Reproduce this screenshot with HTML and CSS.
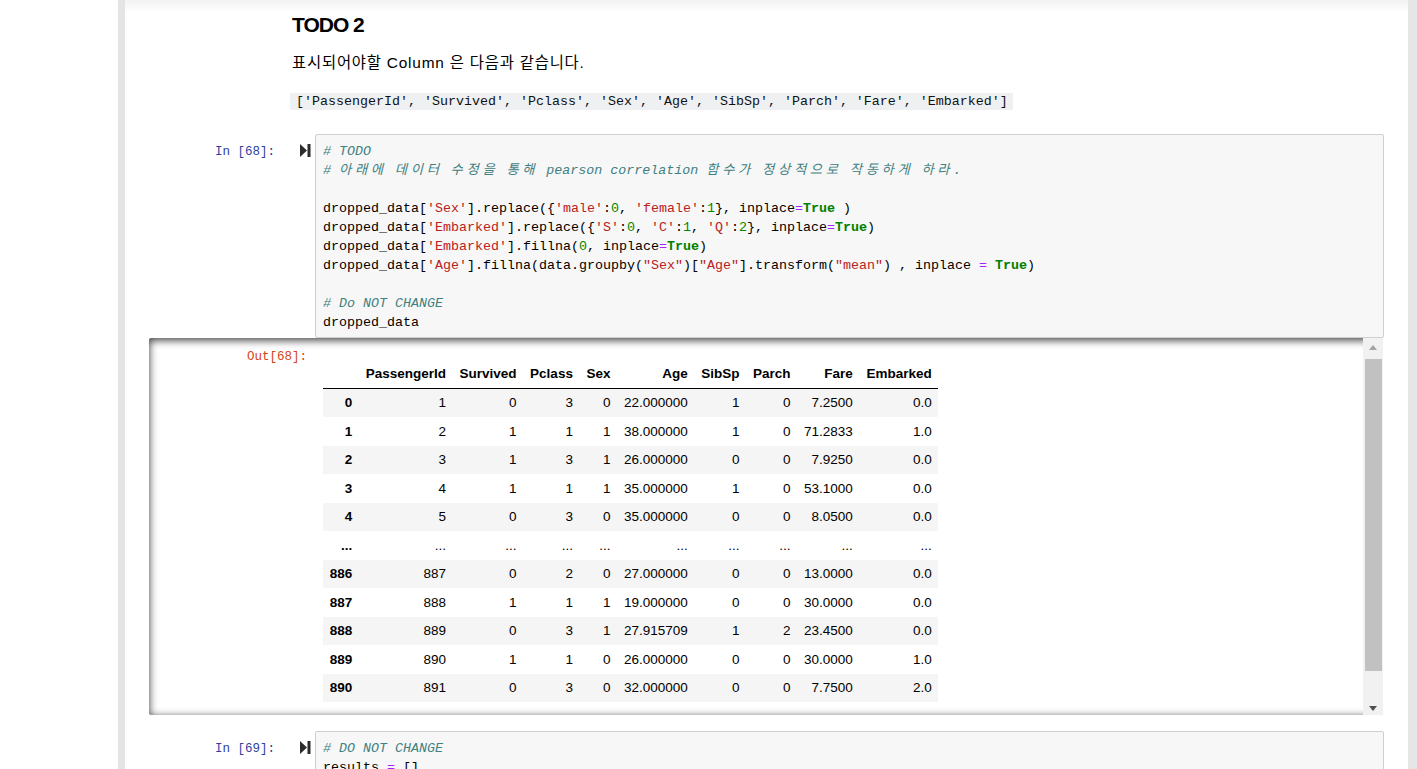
FILE: index.html
```html
<!DOCTYPE html>
<html lang="ko">
<head>
<meta charset="utf-8">
<title>Notebook</title>
<link rel="stylesheet" href="styles.css">
</head>
<body>
<div class="page">
  <div class="gutter"></div>
  <div class="notebook">
    <div class="cells">
      <div class="md">
        <h3 class="md-h">TODO 2</h3>
        <p class="md-p">표시되어야할 Column 은 다음과 같습니다.</p>
        <code class="md-code">['PassengerId', 'Survived', 'Pclass', 'Sex', 'Age', 'SibSp', 'Parch', 'Fare', 'Embarked']</code>
      </div>

      <div class="cell">
        <div class="in-row">
          <div class="prompt in-prompt">In&nbsp;[68]:</div>
          <div class="run"><svg width="11" height="13" viewBox="0 0 11 13"><polygon points="0,0 7,6.5 0,13" fill="#2b2b2b"/><rect x="7.5" y="0" width="3" height="13" fill="#2b2b2b"/></svg></div>
          <pre class="input"><span class="c"># TODO</span>
<span class="c"># <span class="ko">아래에</span> <span class="ko">데이터</span> <span class="ko">수정을</span> <span class="ko">통해</span> pearson correlation <span class="ko">함수가</span> <span class="ko">정상적으로</span> <span class="ko">작동하게</span> <span class="ko">하라</span>.</span>

dropped_data[<span class="s">'Sex'</span>].replace({<span class="s">'male'</span>:<span class="n">0</span>, <span class="s">'female'</span>:<span class="n">1</span>}, inplace<span class="o">=</span><span class="k">True</span> )
dropped_data[<span class="s">'Embarked'</span>].replace({<span class="s">'S'</span>:<span class="n">0</span>, <span class="s">'C'</span>:<span class="n">1</span>, <span class="s">'Q'</span>:<span class="n">2</span>}, inplace<span class="o">=</span><span class="k">True</span>)
dropped_data[<span class="s">'Embarked'</span>].fillna(<span class="n">0</span>, inplace<span class="o">=</span><span class="k">True</span>)
dropped_data[<span class="s">'Age'</span>].fillna(data.groupby(<span class="s">"Sex"</span>)[<span class="s">"Age"</span>].transform(<span class="s">"mean"</span>) , inplace <span class="o">=</span> <span class="k">True</span>)

<span class="c"># Do NOT CHANGE</span>
dropped_data</pre>
        </div>
        <div class="out-box">
          <div class="prompt out-prompt">Out[68]:</div>
          <div class="out-content">
            <table class="df">
              <thead>
                <tr><th></th><th>PassengerId</th><th>Survived</th><th>Pclass</th><th>Sex</th><th>Age</th><th>SibSp</th><th>Parch</th><th>Fare</th><th>Embarked</th></tr>
              </thead>
              <tbody>
                <tr><th>0</th><td>1</td><td>0</td><td>3</td><td>0</td><td>22.000000</td><td>1</td><td>0</td><td>7.2500</td><td>0.0</td></tr>
                <tr><th>1</th><td>2</td><td>1</td><td>1</td><td>1</td><td>38.000000</td><td>1</td><td>0</td><td>71.2833</td><td>1.0</td></tr>
                <tr><th>2</th><td>3</td><td>1</td><td>3</td><td>1</td><td>26.000000</td><td>0</td><td>0</td><td>7.9250</td><td>0.0</td></tr>
                <tr><th>3</th><td>4</td><td>1</td><td>1</td><td>1</td><td>35.000000</td><td>1</td><td>0</td><td>53.1000</td><td>0.0</td></tr>
                <tr><th>4</th><td>5</td><td>0</td><td>3</td><td>0</td><td>35.000000</td><td>0</td><td>0</td><td>8.0500</td><td>0.0</td></tr>
                <tr><th>...</th><td>...</td><td>...</td><td>...</td><td>...</td><td>...</td><td>...</td><td>...</td><td>...</td><td>...</td></tr>
                <tr><th>886</th><td>887</td><td>0</td><td>2</td><td>0</td><td>27.000000</td><td>0</td><td>0</td><td>13.0000</td><td>0.0</td></tr>
                <tr><th>887</th><td>888</td><td>1</td><td>1</td><td>1</td><td>19.000000</td><td>0</td><td>0</td><td>30.0000</td><td>0.0</td></tr>
                <tr><th>888</th><td>889</td><td>0</td><td>3</td><td>1</td><td>27.915709</td><td>1</td><td>2</td><td>23.4500</td><td>0.0</td></tr>
                <tr><th>889</th><td>890</td><td>1</td><td>1</td><td>0</td><td>26.000000</td><td>0</td><td>0</td><td>30.0000</td><td>1.0</td></tr>
                <tr><th>890</th><td>891</td><td>0</td><td>3</td><td>0</td><td>32.000000</td><td>0</td><td>0</td><td>7.7500</td><td>2.0</td></tr>
              </tbody>
            </table>
          </div>
          <div class="sbar">
            <div class="sb-btn"><span class="arr-up"></span></div>
            <div class="sb-thumb"></div>
            <div class="sb-track"></div>
            <div class="sb-btn"><span class="arr-down"></span></div>
          </div>
        </div>
      </div>

      <div class="cell cell2">
        <div class="in-row">
          <div class="prompt in-prompt">In&nbsp;[69]:</div>
          <div class="run"><svg width="11" height="13" viewBox="0 0 11 13"><polygon points="0,0 7,6.5 0,13" fill="#2b2b2b"/><rect x="7.5" y="0" width="3" height="13" fill="#2b2b2b"/></svg></div>
          <pre class="input"><span class="c"># DO NOT CHANGE</span>
results <span class="o">=</span> []
</pre>
        </div>
      </div>
    </div>
  </div>
</div>
</body>
</html>
```

FILE: styles.css
```css
html, body {
  margin: 0;
  padding: 0;
  background: #fff;
  overflow: hidden;
  height: 769px;
}

.page {
  display: flex;
  height: 769px;
}

.gutter {
  width: 118px;
  flex: none;
}

.notebook {
  flex: 1;
  border-left: 7px solid #e4e4e4;
  border-right: 9px solid #e6e6e6;
  background: linear-gradient(to bottom, #f2f2f2 0px, #fff 12px);
}

.cells {
  padding: 0 24px 0 24px;
}

/* Markdown cell */
.md {
  padding: 12px 0 0 143px;
  font-family: "Liberation Sans", "Noto Sans CJK KR", sans-serif;
  color: #000;
}

.md-h {
  margin: 0;
  font-size: 21px;
  line-height: 25px;
  font-weight: bold;
  letter-spacing: -1px;
}

.md-p {
  margin: 15px 0 0 0;
  font-size: 15.4px;
  line-height: 21px;
  letter-spacing: 0.8px;
}

.md-code {
  display: inline-block;
  margin: 20px 0 0 -2px;
  padding: 0 5px 0 6px;
  background: #eff0f1;
  font-family: "Liberation Mono", monospace;
  font-size: 13.33px;
  line-height: 17px;
  color: #111;
}

/* Code cells */
.cell {
  margin-top: 24px;
}

.cell2 {
  margin-top: 16px;
}

.in-row {
  display: flex;
  align-items: flex-start;
}

.prompt {
  font-family: "Liberation Mono", monospace;
  font-size: 12.5px;
  line-height: 19px;
  text-align: right;
  flex: none;
}

.in-prompt {
  width: 126px;
  padding: 9px 9px 0 0;
  color: #303f9f;
}

.run {
  width: 31px;
  flex: none;
  padding: 10px 0 0 16px;
  box-sizing: border-box;
}

.run svg {
  display: block;
}

.input {
  flex: 1;
  margin: 0;
  padding: 7px 7px 5px 7px;
  background: #f7f7f7;
  border: 1px solid #cfcfcf;
  border-radius: 2px;
  font-family: "Liberation Mono", "Noto Sans CJK KR", monospace;
  font-size: 13.33px;
  line-height: 19px;
  color: #000;
  white-space: pre;
}

.cell2 .input {
  height: 60px;
}

.c { color: #408080; font-style: italic; }
.s { color: #ba2121; }
.n { color: #008800; }
.k { color: #008000; font-weight: bold; }
.o { color: #aa22ff; }
.ko {
  letter-spacing: 3.67px;
  font-family: "Noto Sans CJK KR", sans-serif;
  line-height: 10px;
}

/* Output */
.out-box {
  display: flex;
  height: 377px;
  margin-right: 1px;
  box-shadow: inset 0 2px 8px rgba(0, 0, 0, 0.8);
  border-radius: 2px;
}

.out-prompt {
  width: 158px;
  padding: 10px 8px 0 0;
  color: #d84315;
}

.out-content {
  flex: 1;
  padding: 21px 0 0 8px;
}

.df {
  border-collapse: collapse;
  border-spacing: 0;
  font-family: "Liberation Sans", sans-serif;
  font-size: 13.5px;
  color: #000;
}

.df th, .df td {
  padding: 6.75px 6.75px;
  line-height: 15px;
  text-align: right;
  vertical-align: middle;
  white-space: nowrap;
}

.df th {
  font-weight: bold;
}

.df thead th {
  border-bottom: 1px solid #000;
}

.df tbody tr:nth-child(odd) {
  background: #f5f5f5;
}

/* fake scrollbar */
.sbar {
  width: 20px;
  flex: none;
  display: flex;
  flex-direction: column;
  background: #f1f1f1;
}

.sb-btn {
  height: 19px;
  flex: none;
  display: flex;
  align-items: center;
  justify-content: center;
}

.arr-up {
  width: 0;
  height: 0;
  border-left: 4.5px solid transparent;
  border-right: 4.5px solid transparent;
  border-bottom: 5px solid #a3a3a3;
}

.arr-down {
  width: 0;
  height: 0;
  border-left: 4.5px solid transparent;
  border-right: 4.5px solid transparent;
  border-top: 5px solid #505050;
  margin-top: 6px;
}

.sb-thumb {
  height: 312px;
  margin: 2px 1px 0 2px;
  background: #c1c1c1;
  flex: none;
}

.sb-track {
  flex: 1;
}
```
